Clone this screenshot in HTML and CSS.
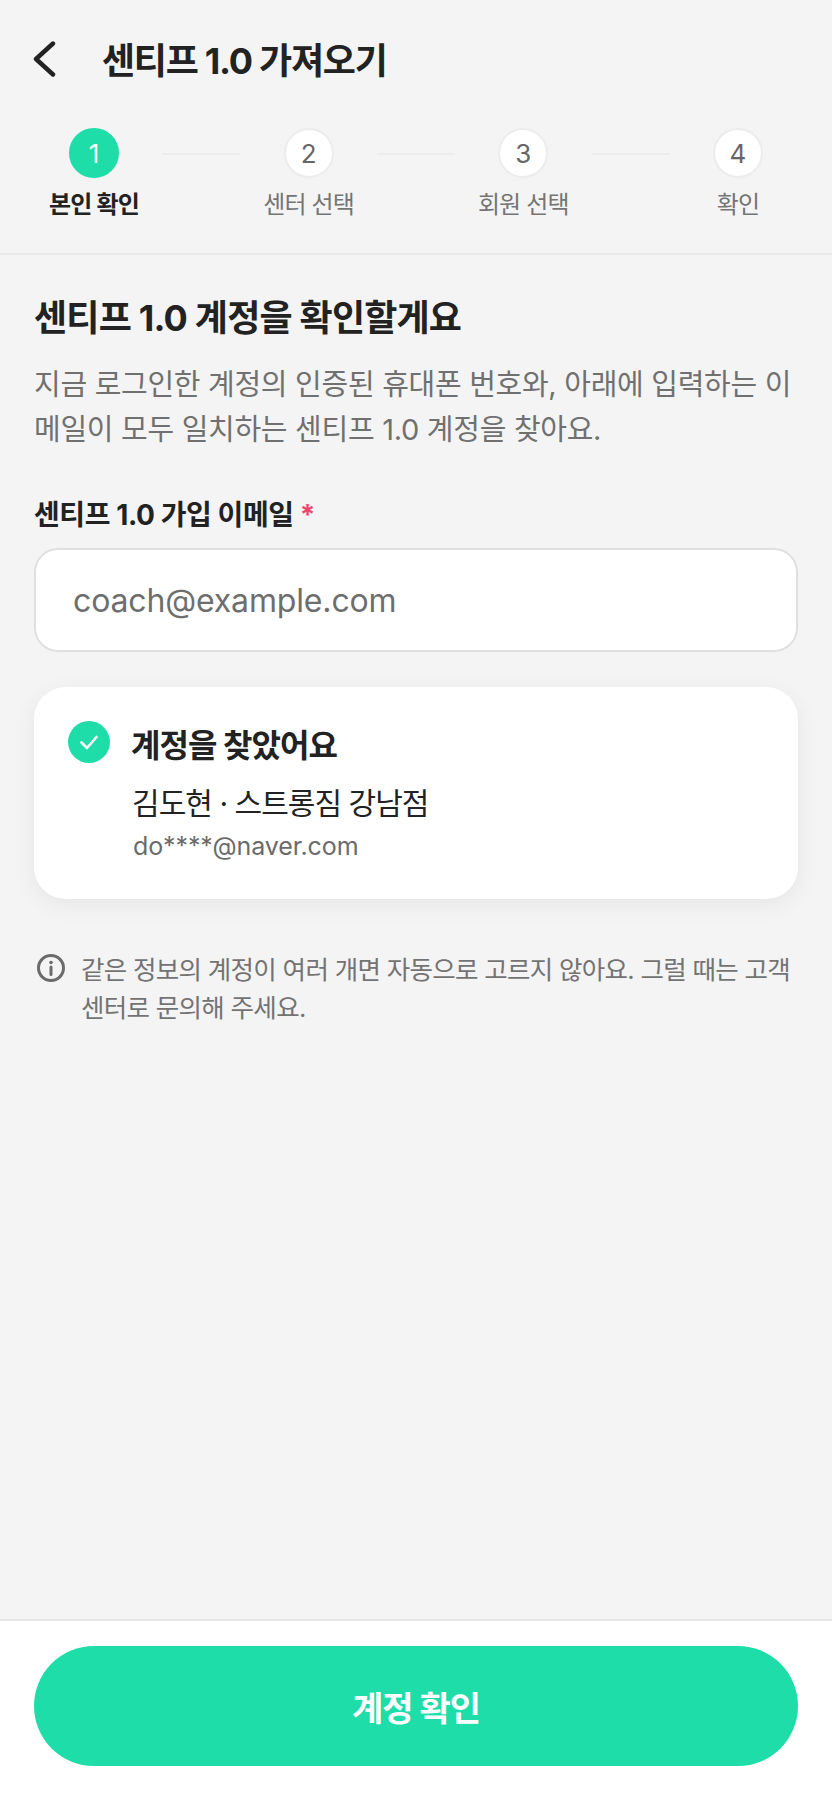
FILE: index.html
```html
<!DOCTYPE html>
<html lang="ko">
<head>
  <meta charset="UTF-8">
  <meta name="viewport" content="width=device-width, initial-scale=1.0">
  <title>센티프 1.0 가져오기</title>
  <link rel="stylesheet" href="styles.css">
</head>
<body>
  <header class="topbar">
    <button class="back" aria-label="뒤로">
      <svg width="24" height="36" viewBox="0 0 24 36" fill="none" stroke="#222" stroke-width="4.4" stroke-linecap="round" stroke-linejoin="round"><path d="M21 2.5 L4 18 L21 33.5"/></svg>
    </button>
    <h1>센티프 1.0 가져오기</h1>
  </header>

  <ol class="steps">
    <li class="step active"><span class="num">1</span><span class="name">본인 확인</span></li>
    <li class="bar"></li>
    <li class="step"><span class="num">2</span><span class="name">센터 선택</span></li>
    <li class="bar"></li>
    <li class="step"><span class="num">3</span><span class="name">회원 선택</span></li>
    <li class="bar"></li>
    <li class="step"><span class="num">4</span><span class="name">확인</span></li>
  </ol>

  <main class="content">
    <h2>센티프 1.0 계정을 확인할게요</h2>
    <p class="desc">지금 로그인한 계정의 인증된 휴대폰 번호와, 아래에 입력하는 이메일이 모두 일치하는 센티프 1.0 계정을 찾아요.</p>

    <label class="field-label" for="email">센티프 1.0 가입 이메일 <span class="req">*</span></label>
    <input class="field" id="email" type="email" placeholder="coach@example.com">

    <div class="card">
      <div class="card-head">
        <svg class="check" width="42" height="42" viewBox="0 0 42 42"><circle cx="21" cy="21" r="21" fill="#1fdda8"/><path d="M13.5 21.5 L19 27 L28.5 16" fill="none" stroke="#fff" stroke-width="2.6" stroke-linecap="round" stroke-linejoin="round"/></svg>
        <strong>계정을 찾았어요</strong>
      </div>
      <div class="card-name">김도현 · 스트롱짐 강남점</div>
      <div class="card-mail">do****@naver.com</div>
    </div>

    <div class="notice">
      <svg class="info" width="30" height="30" viewBox="0 0 30 30" fill="none" stroke="#6b6b6b" stroke-width="3"><circle cx="15" cy="15" r="12.5"/><path d="M15 14 V21.5" stroke-linecap="round"/><circle cx="15" cy="9.5" r="1.8" fill="#6b6b6b" stroke="none"/></svg>
      <p>같은 정보의 계정이 여러 개면 자동으로 고르지 않아요. 그럴 때는 고객센터로 문의해 주세요.</p>
    </div>
  </main>

  <footer class="bottom">
    <button class="confirm">계정 확인</button>
  </footer>
</body>
</html>
```

FILE: styles.css
```css
* { box-sizing: border-box; }
html, body { margin: 0; padding: 0; }
body { width: 832px; height: 1800px; display: flex; flex-direction: column; background: #f4f4f4; color: #222; font-family: Inter, "Noto Sans CJK KR", sans-serif; }

.topbar { display: flex; align-items: center; height: 120px; padding: 0 0 3px 32px; }
.back { width: 70px; padding: 0; border: none; background: none; display: flex; }
.topbar h1 { margin: 0 0 1px; font-size: 36px; font-weight: 700; letter-spacing: -0.035em; }

.steps { list-style: none; margin: 0; padding: 8px 69px 0; height: 135px; border-bottom: 2px solid #e9e9e9; display: flex; align-items: flex-start; justify-content: space-between; }
.step { width: 50px; display: flex; flex-direction: column; align-items: center; }
.num { width: 50px; height: 50px; border-radius: 50%; background: #fff; border: 2px solid #ececec; color: #666; font-size: 26px; display: flex; align-items: center; justify-content: center; }
.name { margin-top: 12px; font-size: 24px; line-height: 30px; color: #757575; white-space: nowrap; letter-spacing: -0.035em; }
.step.active .num { background: #1fdda8; border-color: #1fdda8; color: #fff; }
.step.active .name { color: #222; font-weight: 700; }
.bar { width: 78px; height: 2px; margin-top: 25px; background: #ececec; }

.content { flex: 1; padding: 40px 34px 0; }
.content h2 { margin: 0; font-size: 36px; line-height: 46px; font-weight: 700; letter-spacing: -0.022em; }
.desc { margin: 21px 0 0; font-size: 29px; line-height: 45px; color: #707070; letter-spacing: -0.01em; }
.field-label { display: block; margin-top: 45px; font-size: 28px; line-height: 36px; font-weight: 700; letter-spacing: -0.015em; }
.req { color: #f0466e; }
.field { display: block; width: 100%; height: 104px; margin-top: 15px; padding: 0 37px; border: 2px solid #e0e0e0; border-radius: 24px; background: #fff; font-family: inherit; font-size: 32px; letter-spacing: -0.15px; outline: none; }
.field::placeholder { color: #6e6e6e; opacity: 1; }

.card { margin-top: 35px; height: 212px; padding: 34px; background: #fff; border-radius: 32px; box-shadow: 0 6px 24px rgba(0,0,0,0.06); }
.card-head { display: flex; align-items: flex-start; gap: 21px; }
.card-head strong { font-size: 32px; line-height: 50px; font-weight: 700; letter-spacing: -0.03em; }
.card-name { margin: 12px 0 0 64px; font-size: 30px; line-height: 40px; letter-spacing: -0.032em; }
.card-mail { margin: 5px 0 0 65px; font-size: 25px; line-height: 36px; letter-spacing: -0.1px; color: #6b6b6b; }

.notice { display: flex; gap: 15px; margin-top: 52px; padding-left: 2px; }
.info { flex: none; margin-top: 2px; }
.notice p { margin: 0; font-size: 25.5px; line-height: 38px; color: #737373; letter-spacing: -0.027em; }

.bottom { height: 181px; padding: 25px 34px 0; background: #fff; border-top: 2px solid #e8e8ea; }
.confirm { display: block; width: 100%; height: 120px; border: none; border-radius: 60px; background: #1fdda8; color: #fff; font-family: inherit; font-size: 34px; font-weight: 700; letter-spacing: -0.03em; }
```
